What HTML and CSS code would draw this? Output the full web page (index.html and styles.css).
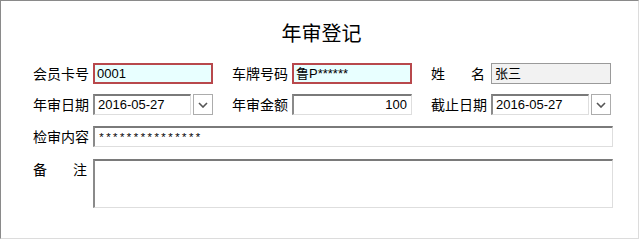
FILE: index.html
```html
<!doctype html>
<html lang="zh">
<head>
  <meta charset="UTF-8"/>
  <title>年审登记</title>
  <link rel="stylesheet" href="styles.css">
</head>
<body>
<div class="panel">
  <h1 class="title">年审登记</h1>
  <div class="form">
    <div class="row">
      <div class="cell">
        <span class="label">会员卡号</span>
        <div class="field required">0001</div>
      </div>
      <div class="cell">
        <span class="label">车牌号码</span>
        <div class="field required">鲁P******</div>
      </div>
      <div class="cell">
        <span class="label spread"><span>姓</span><span>名</span></span>
        <div class="field readonly">张三</div>
      </div>
    </div>
    <div class="row">
      <div class="cell">
        <span class="label">年审日期</span>
        <div class="date">
          <div class="field">2016-05-27</div>
          <div class="drop">
            <svg width="10" height="6" viewBox="0 0 10 6"><path d="M1 1 L5 5 L9 1" fill="none" stroke="#555" stroke-width="1.6"/></svg>
          </div>
        </div>
      </div>
      <div class="cell">
        <span class="label">年审金额</span>
        <div class="field number">100</div>
      </div>
      <div class="cell">
        <span class="label">截止日期</span>
        <div class="date">
          <div class="field">2016-05-27</div>
          <div class="drop">
            <svg width="10" height="6" viewBox="0 0 10 6"><path d="M1 1 L5 5 L9 1" fill="none" stroke="#555" stroke-width="1.6"/></svg>
          </div>
        </div>
      </div>
    </div>
    <div class="row wide">
      <span class="label">检审内容</span>
      <div class="field mask">***************</div>
    </div>
    <div class="row wide top">
      <span class="label spread"><span>备</span><span>注</span></span>
      <div class="field memo"></div>
    </div>
  </div>
</div>
</body>
</html>
```

FILE: styles.css
```css
* {
  box-sizing: border-box;
}

body {
  margin: 0;
  background: #ffffff;
  font-family: "Noto Sans CJK SC", sans-serif;
  color: #000;
}

.panel {
  width: 639px;
  height: 239px;
  border-top: 1px solid #8a8a8a;
  border-left: 1px solid #8a8a8a;
  border-right: 1px solid #dcdcdc;
  border-bottom: 1px solid #dcdcdc;
  background: #fff;
}

.title {
  margin: 0;
  padding-top: 18px;
  padding-left: 4px;
  height: 62px;
  text-align: center;
  font-size: 20px;
  font-weight: normal;
  line-height: 28px;
}

.form {
  display: flex;
  flex-direction: column;
  gap: 10px;
  padding-left: 32px;
}

.row {
  display: flex;
  gap: 19px;
  height: 21px;
}

.cell {
  display: flex;
  align-items: center;
  width: 180px;
}

.label {
  width: 60px;
  padding-right: 6px;
  font-size: 14px;
  line-height: 21px;
  white-space: nowrap;
  flex-shrink: 0;
}

.label.spread {
  display: flex;
  justify-content: space-between;
}

.field {
  height: 21px;
  width: 120px;
  padding: 0 3px;
  font-family: "Liberation Sans", "Noto Sans CJK SC", sans-serif;
  font-size: 13px;
  line-height: 18px;
  background: #fff;
  border-top: 2px solid #7a7a7a;
  border-left: 2px solid #8a8a8a;
  border-right: 1px solid #dedede;
  border-bottom: 1px solid #dedede;
  white-space: nowrap;
  overflow: hidden;
}

.field.required {
  border: 2px solid #b8484c;
  background: #e8ffff;
  padding-left: 2px;
}

.field.readonly {
  border: 1px solid #9a9a9a;
  background: #f2f2f2;
  padding-top: 1px;
  line-height: 18px;
}

.field.number {
  text-align: right;
  padding-right: 4px;
}

.field.mask {
  font-family: "Liberation Mono", monospace;
  font-size: 11.5px;
  line-height: 19px;
}

.date {
  display: flex;
  gap: 2px;
  width: 120px;
}

.date .field {
  width: 98px;
}

.drop {
  width: 20px;
  height: 21px;
  border: 1px solid #acacac;
  display: flex;
  align-items: center;
  justify-content: center;
  background: #fff;
}

.row.wide {
  gap: 0;
  height: 21px;
  margin-top: 1px;
}

.row.wide .field {
  width: 520px;
}

.row.top {
  height: 49px;
  margin-top: 2px;
}

.row.top .label {
  line-height: 20px;
}

.field.memo {
  height: 49px;
}
```
